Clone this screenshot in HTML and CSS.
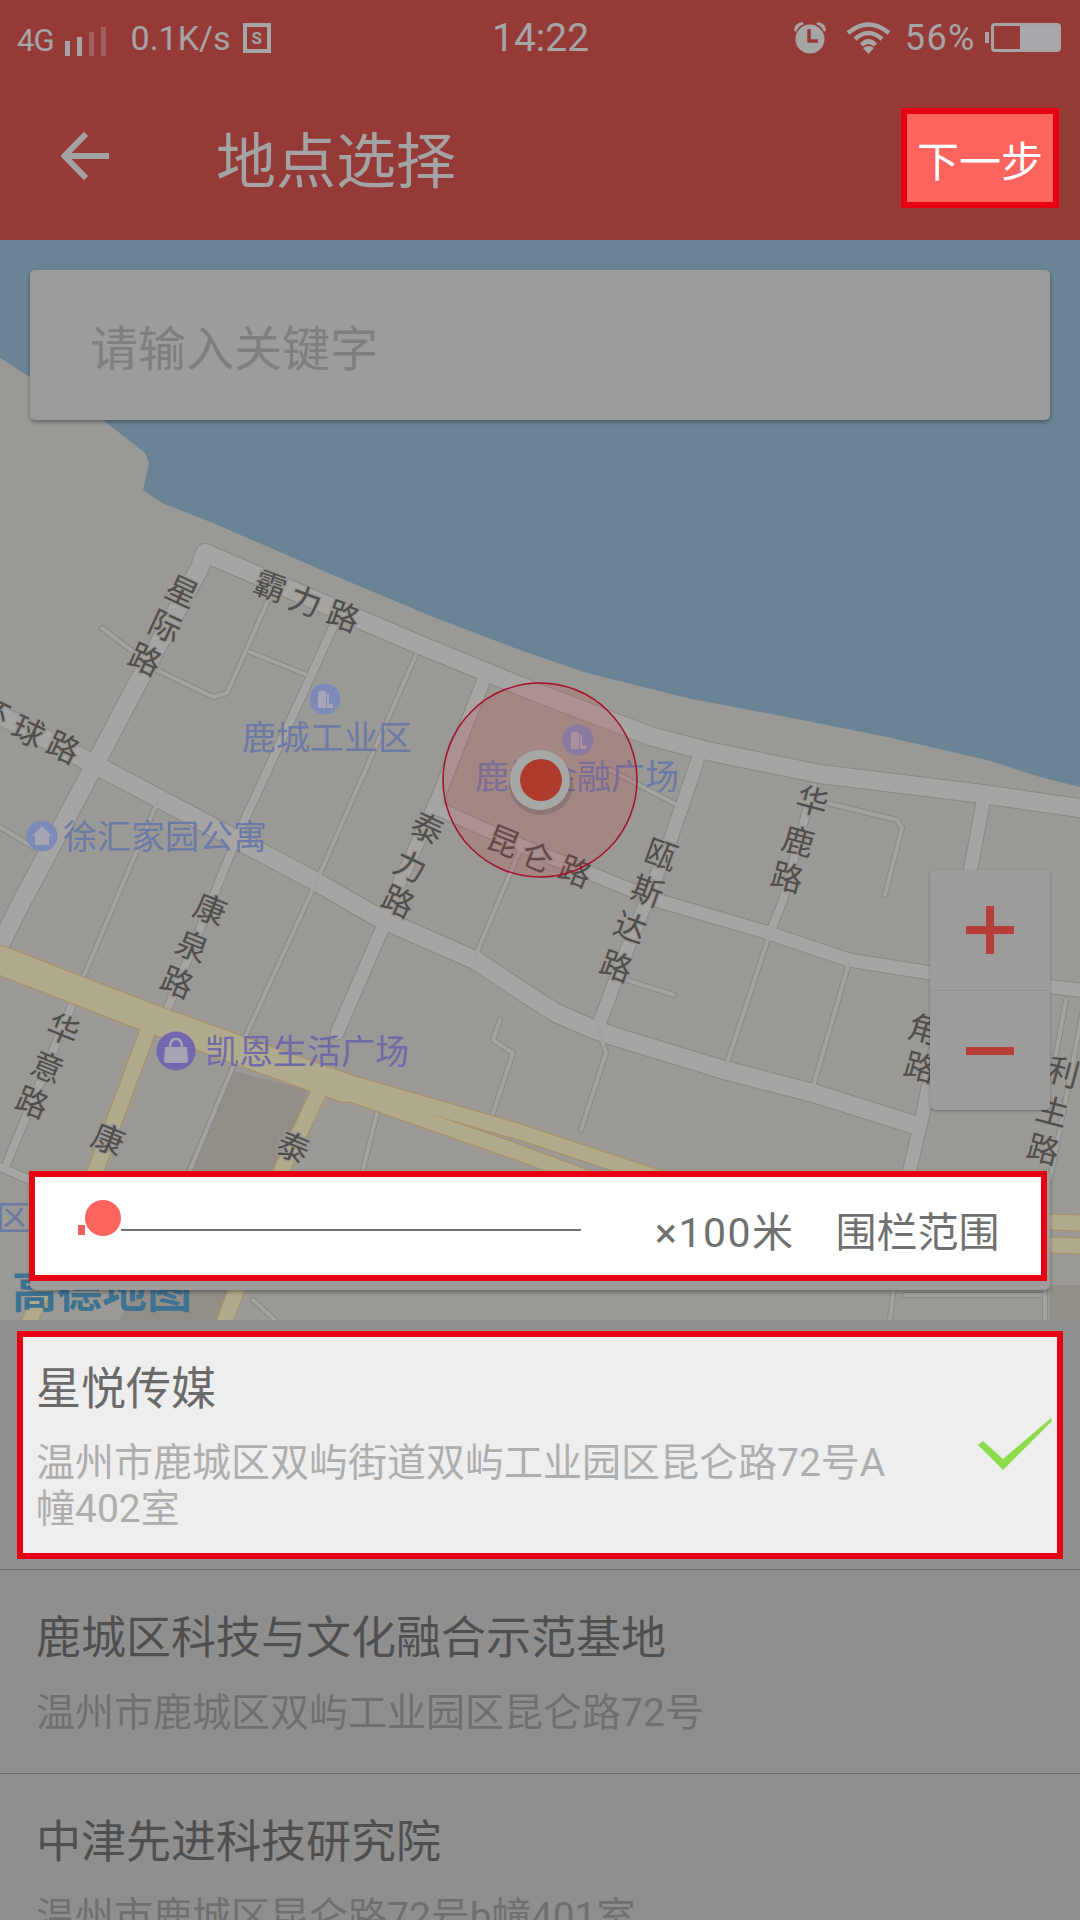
FILE: index.html
```html
<!DOCTYPE html>
<html lang="zh-CN">
<head>
    <meta charset="UTF-8">
    <meta name="viewport" content="width=device-width, initial-scale=1.0">
    <title>地点选择</title>
    <link rel="stylesheet" href="styles.css">
</head>
<body>
<div class="page">
    <!-- Status bar and toolbar -->
    <header class="header">
        <div class="status-bar">
            <div class="status-left">
                <span class="net">4G</span>
                <span class="signal"><i class="b1"></i><i class="b2"></i><i class="b3"></i><i class="b4"></i></span>
                <span class="speed">0.1K/s</span>
                <span class="s-box">S</span>
            </div>
            <span class="clock">14:22</span>
            <div class="status-right">
                <svg class="alarm" width="36" height="33" viewBox="0 0 36 33">
                    <path d="M2 9 Q3 2 10 1 L12 3 Q6 5 4 11 Z M34 9 Q33 2 26 1 L24 3 Q30 5 32 11 Z" fill="#a5a5a5"/>
                    <circle cx="18" cy="18" r="14.5" fill="#a5a5a5"/>
                    <path d="M17 8 V20 H26" fill="none" stroke="#963a38" stroke-width="3.5"/>
                </svg>
                <svg class="wifi" width="45" height="32" viewBox="0 0 45 32">
                    <path d="M2 11 Q22.500 -6 43 11 M9 17 Q22.500 5 36 17 M15.500 23 Q22.500 16 29.500 23" fill="none" stroke="#a5a5a5" stroke-width="4.500"/>
                    <path d="M17 26 Q22.500 22 28 26 L22.500 32 Z" fill="#a5a5a5"/>
                </svg>
                <span class="battery-pct">56%</span>
                <span class="battery"><span class="battery-fill"></span></span>
            </div>
        </div>
        <div class="toolbar">
            <svg class="back" width="48" height="48" viewBox="0 0 48 48">
                <path d="M48 24 H4 M25 2 L3.500 24 L25 46" fill="none" stroke="#a3a3a3" stroke-width="6"/>
            </svg>
            <h1 class="title">地点选择</h1>
            <button class="next-btn">下一步</button>
        </div>
    </header>

    <!-- Map with overlaid controls -->
    <section class="map">
        <svg class="map-canvas" width="1080" height="1080" viewBox="0 240 1080 1080">
            <defs>
                <g id="r20">
                    <path d="M205 553 L413 642 L520 686 L650 736 L703 750 L820 774 L975 793 L1080 808"/>
                    <path d="M205 553 L200 567 L135 688 L92 770 L20 905 L0 945"/>
                    <path d="M0 715 L105 770 L313 880 L379 918 L475 960 L520 990 L556 1013 L595 1030 L616 1037 L724 1070 L813 1093 L915 1125"/>
                </g>
                <g id="r15">
                    <path d="M483 682 L437 800 L393 897 L383 927 L337 1033"/>
                    <path d="M437 808 L520 845 L656 900 L766 932 L849 960 L931 973 L1080 990"/>
                    <path d="M983 803 L971 867 L923 1113 L905 1190"/>
                    <path d="M697 762 L668 847 L627 950 L598 1027"/>
                </g>
                <g id="r10">
                    <path d="M333 627 L310 678 L240 830 L213 897 L167 1010"/>
                    <path d="M813 787 L783 900 L770 933"/>
                    <path d="M72 1005 L7 1163"/>
                    <path d="M0 1167 L30 1180"/>
                </g>
                <g id="r5">
                    <path d="M416 655 L318 878 L247 1033 L190 1170"/>
                    <path d="M157 803 L83 978 L72 1005"/>
                    <path d="M102 628 L157 670 L213 697 L227 693 L267 603 L276 585"/>
                    <path d="M250 652 L312 677"/>
                    <path d="M598 1027 L606 1053 L581 1130"/>
                    <path d="M627 980 L674 995"/>
                    <path d="M770 933 L727 1063"/>
                    <path d="M849 963 L813 1087"/>
                    <path d="M823 802 L897 820 L902 828 L885 895"/>
                    <path d="M1066 1000 L1055 1060"/>
                    <path d="M610 770 L683 808"/>
                    <path d="M520 850 L475 957"/>
                    <path d="M500 1020 L493 1040 L513 1053 L493 1113"/>
                    <path d="M377 1113 L363 1170"/>
                    <path d="M0 827 L33 847"/>
                    <path d="M1085 1000 L1050 1180"/>
                    <path d="M253 1300 L275 1320"/>
                    <path d="M905 1190 L890 1320 M1045 1290 L1045 1320 M905 1295 L1045 1295"/>
                </g>
                <g id="rm">
                    <path d="M0 960 L147 1017 L308 1075 L345 1088"/>
                </g>
                <g id="rs">
                    <path d="M333 1078 L520 1132 L680 1185 L850 1215 L1080 1223"/>
                    <path d="M345 1092 L520 1153 L640 1198 L850 1238 L1080 1246"/>
                    <path d="M147 1033 L97 1167 L30 1320"/>
                    <path d="M320 1090 L283 1167 L225 1320"/>
                </g>
            </defs>

            <rect class="water" x="0" y="240" width="1080" height="1080"/>
            <path class="land" d="M0 358 L96 420 L103 420 L145 453 L149 463 L143 490 L162 503 L213 523 L333 575 L433 617 L520 650 L587 673 L687 698 L787 717 L887 737 L987 760 L1040 777 L1080 787 V1320 H0 Z"/>
            <path class="lot" d="M230 1070 L308 1090 L225 1320 L120 1320 Z"/>
            <path class="lot" d="M1050 1285 H1080 V1320 H1050 Z"/>

            <g class="roads">
                <use href="#r20" class="c20"/><use href="#r15" class="c15"/><use href="#r10" class="c10"/><use href="#r5" class="c5"/>
                <use href="#r20" class="f20"/><use href="#r15" class="f15"/><use href="#r10" class="f10"/><use href="#r5" class="f5"/>
                <use href="#rm" class="yc-m"/><use href="#rs" class="yc-s"/>
                <use href="#rm" class="yf-m"/><use href="#rs" class="yf-s"/>
            </g>

            <!-- road names -->
            <g class="rd">
                <text transform="translate(270 587) rotate(20)">霸</text>
                <text transform="translate(305 602) rotate(20)">力</text>
                <text transform="translate(343 617) rotate(20)">路</text>
                <text transform="translate(182 592) rotate(25)">星</text>
                <text transform="translate(165 627) rotate(25)">际</text>
                <text transform="translate(145 660) rotate(25)">路</text>
                <text transform="translate(-7 713) rotate(25)">环</text>
                <text transform="translate(28 732) rotate(25)">球</text>
                <text transform="translate(63 748) rotate(25)">路</text>
                <text transform="translate(427 829) rotate(25)">泰</text>
                <text transform="translate(410 867) rotate(25)">力</text>
                <text transform="translate(398 902) rotate(25)">路</text>
                <text transform="translate(503 842) rotate(22)">昆</text>
                <text transform="translate(537 858) rotate(22)">仑</text>
                <text transform="translate(575 872) rotate(22)">路</text>
                <text transform="translate(661 855) rotate(20)">瓯</text>
                <text transform="translate(647 892) rotate(20)">斯</text>
                <text transform="translate(630 928) rotate(20)">达</text>
                <text transform="translate(616 967) rotate(20)">路</text>
                <text transform="translate(812 802) rotate(15)">华</text>
                <text transform="translate(798 842) rotate(15)">鹿</text>
                <text transform="translate(787 878) rotate(15)">路</text>
                <text transform="translate(210 910) rotate(22)">康</text>
                <text transform="translate(192 947) rotate(22)">泉</text>
                <text transform="translate(177 983) rotate(22)">路</text>
                <text transform="translate(63 1030) rotate(22)">华</text>
                <text transform="translate(47 1068) rotate(22)">意</text>
                <text transform="translate(32 1103) rotate(22)">路</text>
                <text transform="translate(108 1140) rotate(22)">康</text>
                <text transform="translate(293 1148) rotate(22)">泰</text>
                <text transform="translate(924 1030) rotate(15)">角</text>
                <text transform="translate(920 1068) rotate(15)">路</text>
                <text transform="translate(1063 1073) rotate(15)">利</text>
                <text transform="translate(1052 1112) rotate(15)">生</text>
                <text transform="translate(1043 1150) rotate(15)">路</text>
            </g>

            <!-- places -->
            <text class="poi" x="242" y="738">鹿城工业区</text>
            <text class="poi" x="475" y="777">鹿城金融广场</text>
            <text class="poi" x="63" y="837">徐汇家园公寓</text>
            <text class="poi mall" x="205" y="1052">凯恩生活广场</text>
            <text class="poi" x="-38" y="1218">城区</text>
            <text class="amap-logo" x="12" y="1292">高德地图</text>

            <g class="poi-icon">
                <circle cx="325" cy="699" r="15.500"/>
                <path class="glyph" d="M318 708 V692 Q322 689 326 692 V708 Z M327 708 H333 V704 H329 V694 H327 Z"/>
                <circle cx="578" cy="740" r="15.500"/>
                <path class="glyph" d="M571 749 V733 Q575 730 579 733 V749 Z M580 749 H586 V745 H582 V735 H580 Z"/>
                <circle cx="42" cy="836" r="15.500"/>
                <path class="glyph" d="M42 826 L32 836 L35 836 V845 H49 V836 L52 836 Z"/>
                <circle class="mall-dot" cx="176" cy="1051" r="19.500"/>
                <path class="glyph" d="M165 1047 H187 L188 1060 Q188 1063 185 1063 H167 Q164 1063 164 1060 Z"/>
                <path d="M170 1047 Q170 1039 176 1039 Q182 1039 182 1047" fill="none" stroke="#a5a5b5" stroke-width="2.500"/>
            </g>

            <circle class="fence" cx="540" cy="780" r="97"/>
            <ellipse class="pin-shadow" cx="541" cy="785" rx="32" ry="30"/>
            <circle class="pin-ring" cx="540" cy="780" r="30"/>
            <circle class="pin-dot" cx="541" cy="780" r="21"/>
        </svg>

        <div class="search-box">请输入关键字</div>

        <div class="zoom-ctrl">
            <div class="zoom-btn"><span class="plus"></span></div>
            <div class="zoom-btn"><span class="minus"></span></div>
        </div>

        <div class="range-card">
            <div class="range-panel">
                <div class="slider">
                    <span class="slider-mark"></span>
                    <span class="slider-thumb"></span>
                    <span class="slider-track"></span>
                </div>
                <span class="range-unit">×100米</span>
                <span class="range-label">围栏范围</span>
            </div>
        </div>
    </section>

    <!-- Search results -->
    <ul class="results">
        <li class="result result-selected">
            <div class="selected-box">
                <div class="result-text">
                    <div class="result-name">星悦传媒</div>
                    <div class="result-addr">温州市鹿城区双屿街道双屿工业园区昆仑路72号A幢402室</div>
                </div>
                <svg class="check" width="74" height="52" viewBox="0 0 74 52">
                    <polygon points="0,27 5,23 25,41 73,0 74,3 25,52" fill="#8ddc4c"/>
                </svg>
            </div>
        </li>
        <li class="result">
            <div class="result-name">鹿城区科技与文化融合示范基地</div>
            <div class="result-addr">温州市鹿城区双屿工业园区昆仑路72号</div>
        </li>
        <li class="result">
            <div class="result-name">中津先进科技研究院</div>
            <div class="result-addr">温州市鹿城区昆仑路72号b幢401室</div>
        </li>
    </ul>
</div>
</body>
</html>
```

FILE: styles.css
```css
/* Basic reset and font setup */
* {
    margin: 0;
    padding: 0;
    box-sizing: border-box;
}
body {
    font-family: Roboto, "Noto Sans CJK SC", sans-serif;
    background-color: #8f8f8f;
}
.page {
    width: 1080px;
    height: 1920px;
    overflow: hidden;
    display: flex;
    flex-direction: column;
}

/* Header */
.header {
    height: 240px;
    background-color: #963a38;
    color: #a5a5a5;
}
.status-bar {
    height: 72px;
    position: relative;
    display: flex;
    justify-content: space-between;
    align-items: center;
    padding: 3px 19px 0 17px;
}
.status-left,
.status-right {
    display: flex;
    align-items: center;
}
.net {
    font-size: 31px;
    margin-top: 6px;
    letter-spacing: -1px;
}
.signal {
    display: flex;
    align-items: flex-end;
    gap: 7px;
    height: 30px;
    margin: 6px 0 0 11px;
}
.signal i {
    width: 5px;
    background-color: #a5a5a5;
}
.signal .b1 { height: 15px; }
.signal .b2 { height: 19px; }
.signal .b3 { height: 24px; background-color: #a2605c; }
.signal .b4 { height: 29px; background-color: #a2605c; }
.speed {
    font-size: 34px;
    margin-left: 25px;
}
.s-box {
    width: 28px;
    height: 30px;
    margin-left: 12px;
    border: 4px solid #a5a5a5;
    font-size: 17px;
    font-weight: 700;
    line-height: 22px;
    text-align: center;
}
.clock {
    position: absolute;
    left: 492px;
    top: 15px;
    font-size: 39px;
}
.alarm {
    margin-right: 18px;
}
.wifi {
    margin-right: 14px;
}
.battery-pct {
    font-size: 36px;
    letter-spacing: 1.500px;
    margin-right: 15px;
}
.battery {
    position: relative;
    width: 70px;
    height: 29px;
    border: 3px solid #a5a5a5;
    border-radius: 4px;
    display: flex;
    justify-content: flex-end;
}
.battery::before {
    content: "";
    position: absolute;
    left: -9px;
    top: 6px;
    width: 4px;
    height: 11px;
    background-color: #a5a5a5;
}
.battery-fill {
    width: 38px;
    background-color: #a8a8ae;
}
.toolbar {
    height: 168px;
    display: flex;
    align-items: center;
    padding: 0 21px 0 61px;
}
.title {
    margin-left: 107px;
    font-size: 60px;
    font-weight: 400;
    color: #a3a3a3;
}
.next-btn {
    width: 158px;
    height: 100px;
    margin: 4px 0 0 auto;
    border: 6px solid #e60012;
    background-color: #fd645e;
    color: #fff;
    font-family: inherit;
    font-size: 42px;
}

/* Map */
.map {
    position: relative;
    height: 1080px;
}
.map-canvas {
    display: block;
}
.water { fill: #6b8495; }
.land { fill: #9b9995; }
.lot { fill: #928e87; }
.roads use {
    fill: none;
    stroke-linejoin: round;
    stroke-linecap: round;
}
.c20 { stroke: #8a8884; stroke-width: 20px; }
.c15 { stroke: #8a8884; stroke-width: 15px; }
.c10 { stroke: #8a8884; stroke-width: 10px; }
.c5 { stroke: #8a8884; stroke-width: 6px; }
.f20 { stroke: #a6a5a4; stroke-width: 18px; }
.f15 { stroke: #a6a5a4; stroke-width: 13px; }
.f10 { stroke: #a6a5a4; stroke-width: 8px; }
.f5 { stroke: #a3a2a0; stroke-width: 4px; }
.yc-m { stroke: #ad8f5f; stroke-width: 30px; }
.yc-s { stroke: #ad8f5f; stroke-width: 17px; }
.yf-m { stroke: #b0ab8c; stroke-width: 28px; }
.yf-s { stroke: #b0ab8c; stroke-width: 15px; }
.rd text {
    font-size: 32px;
    fill: #4f4e4c;
    stroke: #9b9995;
    stroke-width: 3px;
    paint-order: stroke;
    text-anchor: middle;
    dominant-baseline: central;
}
.poi {
    font-size: 34px;
    fill: #6c7aa6;
    dominant-baseline: central;
}
.poi.mall {
    fill: #6f6aa8;
}
.amap-logo {
    font-size: 45px;
    font-weight: 700;
    fill: #3d7391;
    dominant-baseline: central;
}
.poi-icon circle { fill: #7d8ab7; }
.poi-icon .mall-dot { fill: #7268ad; }
.poi-icon .glyph { fill: #a5a5b5; }
.fence {
    fill: rgba(200, 50, 60, 0.17);
    stroke: #a5102a;
    stroke-width: 1.500px;
}
.pin-shadow { fill: rgba(60, 50, 50, 0.2); }
.pin-ring { fill: #a6a8a8; }
.pin-dot { fill: #ad3c2f; }

/* Search box */
.search-box {
    position: absolute;
    left: 30px;
    top: 30px;
    width: 1020px;
    height: 150px;
    padding: 0 60px;
    display: flex;
    align-items: center;
    background-color: #9c9c9c;
    border-radius: 5px;
    box-shadow: 0 2px 4px rgba(0, 0, 0, 0.35);
    color: #7f7f7f;
    font-size: 48px;
}

/* Zoom control */
.zoom-ctrl {
    position: absolute;
    left: 930px;
    top: 630px;
    width: 120px;
    height: 240px;
    background-color: #9c9c9c;
    border-radius: 5px;
    box-shadow: 0 1px 3px rgba(0, 0, 0, 0.3);
}
.zoom-btn {
    height: 120px;
    display: flex;
    align-items: center;
    justify-content: center;
}
.zoom-btn + .zoom-btn {
    border-top: 1px solid #929292;
}
.plus,
.minus {
    position: relative;
    display: block;
    width: 48px;
    height: 8px;
    background-color: #b83c38;
}
.plus::after {
    content: "";
    position: absolute;
    left: 20px;
    top: -20px;
    width: 8px;
    height: 48px;
    background-color: #b83c38;
}

/* Range slider card */
.range-card {
    position: absolute;
    left: 30px;
    top: 931px;
    width: 1020px;
    height: 119px;
    background-color: #9c9c9c;
    border-radius: 5px;
    box-shadow: 0 2px 4px rgba(0, 0, 0, 0.35);
}
.range-panel {
    margin-left: -1px;
    width: 1018px;
    height: 110px;
    border: 6px solid #e60012;
    background-color: #fff;
    display: flex;
    align-items: center;
    color: #707070;
    font-size: 41px;
}
.slider {
    position: relative;
    width: 546px;
    height: 100%;
    margin-left: 41px;
}
.slider-mark {
    position: absolute;
    left: 2px;
    top: 48px;
    width: 7px;
    height: 10px;
    background-color: #f0605e;
}
.slider-thumb {
    position: absolute;
    left: 9px;
    top: 23px;
    width: 36px;
    height: 36px;
    border-radius: 50%;
    background-color: #fd645e;
}
.slider-track {
    position: absolute;
    left: 45px;
    top: 52px;
    width: 460px;
    height: 2px;
    background-color: #707070;
}
.range-unit {
    margin-left: 33px;
    margin-top: 5px;
    letter-spacing: 1.500px;
}
.range-label {
    margin-left: 41px;
    margin-top: 5px;
}

/* Results list */
.results {
    list-style: none;
    flex: 1;
    background-color: #8f8f8f;
}
.result {
    padding: 39px 36px 37px;
    border-bottom: 1px solid #6d6d6d;
    color: #4f4f4f;
}
.result-name {
    font-size: 45px;
    line-height: 60px;
}
.result-addr {
    margin-top: 21px;
    font-size: 39px;
    line-height: 46px;
    color: #6f6f6f;
}
.result-selected {
    padding: 11px 17px 10px;
}
.selected-box {
    height: 228px;
    padding: 23px 0 0 13px;
    display: flex;
    border: 6px solid #e60012;
    background-color: #eeeeee;
}
.selected-box .result-name {
    color: #6a6a6a;
}
.selected-box .result-addr {
    margin-top: 20px;
    color: #aeaeae;
}
.result-text {
    width: 860px;
}
.check {
    margin: 58px 0 0 82px;
    flex: none;
}
```
